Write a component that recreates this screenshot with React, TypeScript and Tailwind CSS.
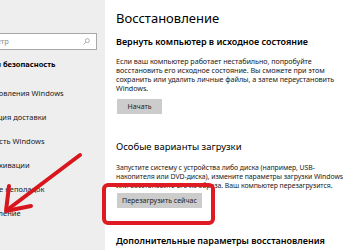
import React from 'react';

const sideItems = [
  'Центр обновления Windows',
  'Оптимизация доставки',
  'Безопасность Windows',
  'Служба архивации',
  'Устранение неполадок',
  'Восстановление',
  'Активация',
];

const Sidebar: React.FC = () => (
  <aside className="w-[105px] shrink-0 bg-[#eeeeee] overflow-hidden pt-[33px]">
    <div className="-ml-[62px] w-[159px] h-[17px] bg-white border border-[#a8a8a8] flex items-center justify-between pl-[10px] pr-[6px]">
      <span className="text-[7.5px] text-[#8a8a8a] leading-none">Найти параметр</span>
      <svg width="7" height="7" viewBox="0 0 16 16" fill="none" stroke="#8a8a8a" strokeWidth="1.5">
        <circle cx="10" cy="6" r="4.5" />
        <path d="M6.8 9.2 1.5 14.5" />
      </svg>
    </div>
    <div className="-ml-[54px] mt-[9px] text-[7.5px] font-bold leading-[10px] whitespace-nowrap text-black">
      Обновление и безопасность
    </div>
    <div className="mt-[19px] flex flex-col gap-[14px]">
      {sideItems.map((label) => (
        <div key={label} className="-ml-[39px] text-[7.5px] leading-[10px] whitespace-nowrap text-[#1a1a1a]">
          {label}
        </div>
      ))}
    </div>
  </aside>
);

const Button: React.FC<{ label: string; width: string }> = ({ label, width }) => (
  <div className={`${width} h-[15px] bg-[#cccccc] flex items-center justify-center text-[7px] text-[#222] leading-none`}>
    {label}
  </div>
);

const Para: React.FC<{ lines: string[]; className?: string }> = ({ lines, className }) => (
  <p className={`leading-[9px] tracking-[-0.05px] text-[#1a1a1a] whitespace-nowrap ${className ?? ''}`}>
    {lines.map((l, i) => (
      <React.Fragment key={i}>
        {l}
        {i < lines.length - 1 && <br />}
      </React.Fragment>
    ))}
  </p>
);

export default function App() {
  return (
    <div
      className="relative w-[350px] h-[250px] flex overflow-hidden bg-white text-black"
      style={{ fontFamily: '"Noto Sans", "Open Sans", sans-serif' }}
    >
      <Sidebar />
      <main className="flex-1 pl-[11px] pt-[10px] overflow-hidden">
        <h1 className="text-[13px] leading-[16px] font-normal">Восстановление</h1>
        <h2 className="mt-[10px] text-[9px] leading-[12px] font-semibold whitespace-nowrap">
          Вернуть компьютер в исходное состояние
        </h2>
        <Para
          className="mt-[9px] text-[7.2px]"
          lines={[
            'Если ваш компьютер работает нестабильно, попробуйте',
            'восстановить его исходное состояние. Вы сможете при этом',
            'сохранить или удалить личные файлы, а затем переустановить',
            'Windows.',
          ]}
        />
        <div className="mt-[6px] ml-[1px]">
          <Button label="Начать" width="w-[45px]" />
        </div>
        <h2 className="mt-[26px] text-[9.5px] leading-[13px] font-normal whitespace-nowrap">
          Особые варианты загрузки
        </h2>
        <Para
          className="mt-[10px] text-[6.9px]"
          lines={[
            'Запустите систему с устройства либо диска (например, USB-',
            'накопителя или DVD-диска), измените параметры загрузки Windows',
            'или восстановите его из образа. Ваш компьютер перезагрузится.',
          ]}
        />
        <div className="mt-[3px] ml-[1px]">
          <Button label="Перезагрузить сейчас" width="w-[85px]" />
        </div>
        <h2 className="mt-[27px] text-[9px] leading-[12px] font-semibold whitespace-nowrap">
          Дополнительные параметры восстановления
        </h2>
      </main>

      {/* red highlight frame around the restart button */}
      <div className="absolute left-[102px] top-[183px] w-[113px] h-[42px] border-[4px] border-[#de1a22] rounded-[6px]" />

      {/* red arrow pointing at the sidebar item */}
      <svg className="absolute left-0 top-0" width="350" height="250" viewBox="0 0 350 250">
        <g stroke="#d8161d" strokeWidth="4" strokeLinecap="round" strokeLinejoin="round" fill="none">
          <path d="M80 155 L7 210" />
          <path d="M9 186 L6 211 L31 206" />
        </g>
      </svg>
    </div>
  );
}
